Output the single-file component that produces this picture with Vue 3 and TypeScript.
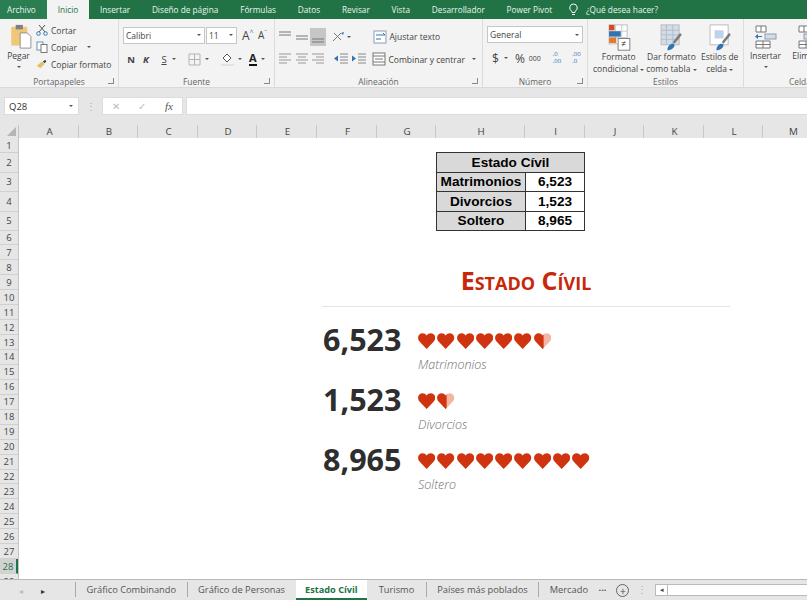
<script setup lang="ts">
interface Line { x1: number; y1: number; x2: number; y2: number }
const topTabs: string[] = ['Insertar', 'Diseño de página', 'Fórmulas', 'Datos', 'Revisar', 'Vista', 'Desarrollador', 'Power Pivot']
const columns: { name: string; width: number }[] = [
  { name: 'A', width: 60 }, { name: 'B', width: 59 }, { name: 'C', width: 60 }, { name: 'D', width: 59 },
  { name: 'E', width: 60 }, { name: 'F', width: 60 }, { name: 'G', width: 59 }, { name: 'H', width: 89 },
  { name: 'I', width: 60 }, { name: 'J', width: 59 }, { name: 'K', width: 60 }, { name: 'L', width: 59 },
  { name: 'M', width: 60 },
]
const rows = Array.from({ length: 29 }, (_, i) => ({
  n: i + 1,
  height: i === 0 ? 15 : i < 4 ? 19.5 : i === 4 ? 19 : 14.95,
  active: i === 27,
}))
const tableRows = [
  { label: 'Matrimonios', value: '6,523' },
  { label: 'Divorcios', value: '1,523' },
  { label: 'Soltero', value: '8,965' },
]
const chartRows = [
  { value: '6,523', label: 'Matrimonios', full: 6, half: true },
  { value: '1,523', label: 'Divorcios', full: 1, half: true },
  { value: '8,965', label: 'Soltero', full: 9, half: false },
]
const fullHeart = 'M9 16 L1.6 8.6 C-0.5 6.4 -0.3 3 1.5 1.4 C3.6 -0.4 7.2 -0.3 9 2.6 C10.8 -0.3 14.4 -0.4 16.5 1.4 C18.3 3 18.5 6.4 16.4 8.6 Z'
const leftHalf = 'M10 15 L9 16 L1.6 8.6 C-0.5 6.4 -0.3 3 1.5 1.4 C3.6 -0.4 7.2 -0.3 9 2.6 L10 1.6 Z'
const rightHalf = 'M9 16 L16.4 8.6 C18.5 6.4 18.3 3 16.5 1.4 C14.4 -0.4 10.8 -0.3 9 2.6 Z'

const hl = (x1: number, x2: number, y: number): Line => ({ x1, x2, y1: y, y2: y })
const valign: Line[][] = [
  [hl(2, 14, 3), hl(2, 14, 6)],
  [hl(2, 14, 7), hl(2, 14, 10)],
  [hl(2, 14, 10), hl(2, 14, 13)],
]
const halign: Line[][] = [
  [hl(2, 14, 3), hl(2, 10, 6), hl(2, 14, 9), hl(2, 10, 12)],
  [hl(2, 14, 3), hl(4, 12, 6), hl(2, 14, 9), hl(4, 12, 12)],
  [hl(2, 14, 3), hl(6, 14, 6), hl(2, 14, 9), hl(6, 14, 12)],
]
const sheets = [
  { name: 'Gráfico Combinando', active: false },
  { name: 'Gráfico de Personas', active: false },
  { name: 'Estado Cívil', active: true },
  { name: 'Turismo', active: false },
  { name: 'Países más poblados', active: false },
  { name: 'Mercado', active: false },
]
</script>

<template>
  <div class="app">
    <header class="tabs">
      <span class="tab file">Archivo</span>
      <span class="tab home">Inicio</span>
      <span v-for="t in topTabs" :key="t" class="tab">{{ t }}</span>
      <svg class="bulb" width="11" height="13" viewBox="0 0 11 13"><path d="M5.5 1a3.8 3.8 0 0 0-2 7c.4.4.5 1 .5 1.5h3c0-.5.1-1.1.5-1.5a3.8 3.8 0 0 0-2-7zM4 11.5h3" fill="none" stroke="#fff" /></svg>
      <span class="tell">¿Qué desea hacer?</span>
    </header>

    <section class="ribbon">
      <div class="group g-clip">
        <div class="body clip-body">
          <div class="big pegar">
            <svg width="25" height="25" viewBox="0 0 25 28">
              <rect x="1" y="3" width="18" height="21" rx="1" fill="#f0c778" />
              <rect x="6" y="1" width="8" height="5" fill="#7f7f7f" />
              <path d="M11 10h8l4 4v13H11z" fill="#fff" stroke="#8a8a8a" />
            </svg>
            <span class="pegar-label">Pegar</span>
            <i class="caret"></i>
          </div>
          <div class="small-list">
            <div class="small">
              <svg width="12" height="12" viewBox="0 0 12 12"><path d="M3 1l6 7M9 1L3 8" stroke="#555" fill="none" /><circle cx="2.5" cy="9.5" r="1.8" fill="none" stroke="#2f75b5" /><circle cx="9.5" cy="9.5" r="1.8" fill="none" stroke="#2f75b5" /></svg>
              Cortar
            </div>
            <div class="small">
              <svg width="12" height="12" viewBox="0 0 12 12"><rect x="1" y="1" width="6" height="8" fill="#fff" stroke="#6f8fb5" /><rect x="5" y="3.5" width="6" height="8" fill="#fff" stroke="#777" /></svg>
              Copiar <i class="caret caret-gap"></i>
            </div>
            <div class="small">
              <svg width="12" height="12" viewBox="0 0 14 12"><path d="M1 8l6-5 3 3-5 5z" fill="#e8bd62" /><path d="M8 3l3-2 1 2-2 2z" fill="#444" /></svg>
              Copiar formato
            </div>
          </div>
        </div>
        <div class="label">Portapapeles</div><i class="launcher"></i>
      </div>

      <div class="group g-font">
        <div class="body font-body">
          <div class="line">
            <div class="combo font-name"><span>Calibri</span><i class="caret"></i></div>
            <div class="combo font-size"><span>11</span><i class="caret"></i></div>
            <span class="grow-a">A<sup>^</sup></span>
            <span class="grow-a shrink">A<sup>ˇ</sup></span>
          </div>
          <div class="line fmt-line">
            <b class="fmt">N</b>
            <b class="fmt it">K</b>
            <span class="fmt und">S</span><i class="caret"></i>
            <svg class="borders" width="13" height="13" viewBox="0 0 13 13"><path d="M1 1h11v11H1zM6.5 1v11M1 6.5h11" fill="none" stroke="#b4b4b4" /></svg><i class="caret"></i>
            <svg class="fill" width="15" height="14" viewBox="0 0 15 14"><path d="M3 6l4-4 4 4-4 4z" fill="#fff" stroke="#555" /><rect x="1" y="12" width="13" height="2" fill="#e3e3e3" /></svg><i class="caret"></i>
            <span class="color-a">A</span><i class="caret"></i>
          </div>
        </div>
        <div class="label">Fuente</div><i class="launcher"></i>
      </div>

      <div class="group g-align">
        <div class="body align-body">
          <div class="line">
            <svg v-for="(ic, i) in valign" :key="i" class="aln" :class="{ on: i === 2 }" width="16" height="18" viewBox="0 0 16 16">
              <line v-for="(l, j) in ic" :key="j" :x1="l.x1" :x2="l.x2" :y1="l.y1" :y2="l.y2" stroke="#777" />
            </svg>
            <svg class="orient" width="14" height="14" viewBox="0 0 14 14"><path d="M2 11L10 3M3 3l7 7" stroke="#777" fill="none" /><path d="M10 3l3-1-1 3z" fill="#2f75b5" /></svg><i class="caret"></i>
            <svg class="wrap-ic" width="15" height="14" viewBox="0 0 15 14"><rect x="1" y="1" width="12" height="12" fill="#fff" stroke="#8a9db5" /><path d="M3 5h9l-2-2M3 9h5" fill="none" stroke="#2f75b5" /></svg>
            <span class="wrap-text">Ajustar texto</span>
          </div>
          <div class="line">
            <svg v-for="(ic, i) in halign" :key="i" class="aln" width="16" height="16" viewBox="0 0 16 16">
              <line v-for="(l, j) in ic" :key="j" :x1="l.x1" :x2="l.x2" :y1="l.y1" :y2="l.y2" stroke="#999" />
            </svg>
            <svg class="indent first" width="14" height="12" viewBox="0 0 14 12"><path d="M6 1h8M6 4h8M6 7h8M6 10h8" stroke="#888" /><path d="M0 5.5l4-3v6z" fill="#2f75b5" /></svg>
            <svg class="indent" width="14" height="12" viewBox="0 0 14 12"><path d="M6 1h8M6 4h8M6 7h8M6 10h8" stroke="#888" /><path d="M4 5.5l-4-3v6z" fill="#2f75b5" /></svg>
            <svg class="wrap-ic merge" width="15" height="14" viewBox="0 0 15 14"><rect x="1" y="1" width="12" height="12" fill="#fff" stroke="#777" /><path d="M1 4h12M1 10h12M3 7h8" fill="none" stroke="#777" /></svg>
            <span class="wrap-text">Combinar y centrar</span><i class="caret merge-caret"></i>
          </div>
        </div>
        <div class="label">Alineación</div><i class="launcher"></i>
      </div>

      <div class="group g-num">
        <div class="body num-body">
          <div class="combo num-format"><span>General</span><i class="caret"></i></div>
          <div class="line num-line">
            <span class="cur">$</span><i class="caret"></i>
            <span class="pct">%</span>
            <span class="thou">000</span>
            <span class="dec">,0<br />,00</span>
            <span class="dec second">,00<br />,0</span>
          </div>
        </div>
        <div class="label">Número</div><i class="launcher"></i>
      </div>

      <div class="group g-style">
        <div class="body style-body">
          <div class="big-btn">
            <svg width="24" height="31" viewBox="0 0 24 31">
              <rect x="1" y="1" width="20" height="21" fill="#fff" stroke="#b7b7b7" />
              <path d="M1 8h20M1 15h20M8 1v21M15 1v21" stroke="#c8c8c8" />
              <rect x="1" y="1" width="6" height="6" fill="#d9472b" />
              <rect x="1" y="8" width="13" height="6" fill="#2f75b5" />
              <rect x="1" y="15" width="8" height="6" fill="#e8772e" />
              <rect x="11" y="16" width="13" height="13" fill="#fff" stroke="#777" />
              <text x="14" y="26" class="ne">≠</text>
            </svg>
            <span>Formato</span><span>condicional <i class="caret tiny"></i></span>
          </div>
          <div class="big-btn">
            <svg width="24" height="31" viewBox="0 0 24 31">
              <rect x="1" y="1" width="20" height="22" fill="#d6dce4" stroke="#b7b7b7" />
              <path d="M1 7h20M1 12h20M1 17h20M7 1v22M14 1v22" stroke="#a9bcd2" />
              <path d="M14 20l8-10 2 2-8 10z" fill="#7a7a7a" />
              <path d="M8 29c0-5 4-8 7-7l1 2c-1 3-4 5-8 5z" fill="#2f75b5" />
            </svg>
            <span>Dar formato</span><span>como tabla <i class="caret tiny"></i></span>
          </div>
          <div class="big-btn">
            <svg width="24" height="31" viewBox="0 0 24 31">
              <rect x="1" y="1" width="20" height="22" fill="#fff" stroke="#b7b7b7" />
              <rect x="6" y="7" width="10" height="9" fill="#bcd3ea" />
              <path d="M14 20l8-10 2 2-8 10z" fill="#7a7a7a" />
              <path d="M8 29c0-5 4-8 7-7l1 2c-1 3-4 5-8 5z" fill="#2f75b5" />
            </svg>
            <span>Estilos de</span><span>celda <i class="caret tiny"></i></span>
          </div>
        </div>
        <div class="label">Estilos</div>
      </div>

      <div class="group g-cells">
        <div class="body cells-body">
          <div class="cell-btn">
            <svg width="22" height="24" viewBox="0 0 22 24">
              <path d="M1 1h10v6H1zM6 1v6M1 16h14v7H1zM8 16v7M1 19.5h14" fill="#fff" stroke="#777" />
              <rect x="10" y="9" width="11" height="5" fill="#d6dce4" stroke="#8a9db5" />
              <path d="M1 11.5h6" stroke="#2f75b5" /><path d="M0 11.5l3-2.5v5z" fill="#2f75b5" />
            </svg>
            <span>Insertar</span><i class="caret"></i>
          </div>
          <div class="cell-btn">
            <svg width="22" height="24" viewBox="0 0 22 24">
              <path d="M1 1h10v6H1zM6 1v6M1 16h14v7H1zM8 16v7M1 19.5h14" fill="#fff" stroke="#777" />
              <rect x="6" y="9" width="8" height="5" fill="#d6dce4" stroke="#8a9db5" />
              <path d="M14 7l7 9M21 7l-7 9" stroke="#d9472b" stroke-width="1.5" />
            </svg>
            <span>Eliminar</span><i class="caret"></i>
          </div>
        </div>
        <div class="label cells-label">Celdas</div>
      </div>
    </section>

    <section class="formula">
      <div class="name-box"><span>Q28</span><i class="caret"></i></div>
      <span class="grip">⋮</span>
      <div class="fx-box">
        <span class="x">✕</span><span class="check">✓</span><span class="fx">fx</span>
      </div>
      <div class="input"></div>
    </section>

    <section class="col-head">
      <div class="corner"><i></i></div>
      <div v-for="c in columns" :key="c.name" class="col" :style="{ width: c.width + 'px' }">{{ c.name }}</div>
    </section>

    <section class="sheet">
      <aside class="row-head">
        <div v-for="r in rows" :key="r.n" class="row" :class="{ active: r.active }" :style="{ height: r.height + 'px' }">{{ r.n }}</div>
      </aside>
      <main class="canvas">
        <table class="data">
          <colgroup><col class="c-label" /><col class="c-value" /></colgroup>
          <thead><tr><th colspan="2">Estado Cívil</th></tr></thead>
          <tbody>
            <tr v-for="r in tableRows" :key="r.label">
              <th>{{ r.label }}</th><td>{{ r.value }}</td>
            </tr>
          </tbody>
        </table>
        <div class="chart">
          <h1>Estado Cívil</h1>
          <div class="rule"></div>
          <div v-for="r in chartRows" :key="r.label" class="stat">
            <div class="num">{{ r.value }}</div>
            <div class="detail">
              <div class="hearts">
                <svg v-for="h in r.full" :key="h" class="heart" viewBox="0 0 18 16" preserveAspectRatio="none">
                  <path :d="fullHeart" />
                </svg>
                <svg v-if="r.half" class="heart" viewBox="0 0 18 16" preserveAspectRatio="none">
                  <path :d="rightHalf" class="pale" /><path :d="leftHalf" />
                </svg>
              </div>
              <div class="cap">{{ r.label }}</div>
            </div>
          </div>
        </div>
      </main>
    </section>

    <footer class="bottom">
      <div class="nav">
        <span class="prev">◂</span><span class="next">▸</span>
      </div>
      <span v-for="s in sheets" :key="s.name" class="sheet-tab" :class="{ on: s.active }">{{ s.name }}</span>
      <span class="more">...</span>
      <span class="plus">+</span>
      <span class="grip">⋮</span>
      <div class="scroll"><span class="arrow">◂</span></div>
    </footer>
  </div>
</template>

<style scoped>
.app { width: 807px; height: 600px; overflow: hidden; display: flex; flex-direction: column; background: #e6e6e6; font-family: "Open Sans", "Noto Sans", sans-serif; color: #444; font-size: 8.5px; }
i { font-style: normal; }
.tabs { height: 19px; flex: none; background: #217346; display: flex; align-items: center; color: #fff; font-size: 8.25px; white-space: nowrap; }
.tab { padding: 0 10.9px; line-height: 19px; color: #e9f3ee; }
.tab.file { width: 47px; padding: 0 0 0 7px; background: #2b7d52; box-sizing: border-box; }
.tab.home { background: #f3f3f3; color: #217346; width: 42px; padding: 0; text-align: center; margin-right: 0; }
.bulb { margin-left: 5px; }
.tell { margin-left: 7px; color: #e9f3ee; }
.ribbon { height: 69px; flex: none; background: #f3f3f3; border-bottom: 1px solid #d9d9d9; box-sizing: border-box; display: flex; overflow: hidden; }
.group { position: relative; flex: none; display: flex; flex-direction: column; border-right: 1px solid #dcdcdc; box-sizing: border-box; }
.body { height: 56px; flex: none; display: flex; }
.label { text-align: center; color: #666; font-size: 8.4px; line-height: 14px; flex: none; }
.launcher { position: absolute; right: 4px; bottom: 3px; width: 5px; height: 5px; border-right: 1px solid #888; border-bottom: 1px solid #888; }
.caret { display: inline-block; width: 0; height: 0; border-left: 2px solid transparent; border-right: 2px solid transparent; border-top: 2.5px solid #555; }
.g-clip { width: 119px; }
.g-font { width: 156px; }
.g-align { width: 208px; }
.g-num { width: 105px; }
.g-style { width: 156px; }
.g-cells { width: 73px; border-right: 0; }
.clip-body { padding: 5px 0 0 5px; box-sizing: border-box; }
.big { width: 27px; display: flex; flex-direction: column; align-items: center; }
.pegar svg { margin-left: 6px; }
.pegar-label { margin-top: 1px; line-height: 12px; }
.pegar .caret { margin-top: 4px; }
.small-list { margin-left: 4px; display: flex; flex-direction: column; gap: 5px; }
.small { display: flex; align-items: center; gap: 3px; height: 12px; white-space: nowrap; font-size: 8.5px; }
.small .caret-gap { margin-left: 7px; }
.font-body { flex-direction: column; padding: 7px 0 0 4px; box-sizing: border-box; }
.line { display: flex; align-items: center; height: 18px; }
.combo { background: #fff; border: 1px solid #c6c6c6; box-sizing: border-box; height: 17px; display: flex; align-items: center; justify-content: space-between; padding: 0 3px 0 2px; color: #444; }
.font-name { width: 82px; margin-right: 1px; }
.font-size { width: 31px; }
.grow-a { font-size: 12px; margin-left: 5px; width: 13px; }
.grow-a sup { font-size: 7px; color: #2f75b5; line-height: 0; }
.shrink { font-size: 10px; margin-left: 3px; }
.fmt-line { margin-top: 6px; }
.fmt { margin-left: 4px; width: 8px; font-size: 9.5px; text-align: center; }
.fmt.it { margin-left: 7px; font-style: italic; }
.fmt.und { margin-left: 10px; text-decoration: underline; margin-right: 4px; }
.borders { margin: 0 4px 0 12px; }
.fill { margin: 0 3px 0 11px; }
.color-a { margin-left: 7px; margin-right: 4px; font-size: 11px; font-weight: 700; color: #222; border-bottom: 2px solid #111; line-height: 12px; }
.align-body { flex-direction: column; padding: 4px 0 0 2px; box-sizing: border-box; }
.align-body .line:first-child { height: 19px; margin-top: 4px; }
.align-body .line + .line { margin-top: 4px; }
.aln { flex: none; margin-right: 0.5px; }
.aln.on { background: #c6c6c6; }
.orient { margin-left: 4px; margin-right: 2px; }
.wrap-ic { margin-left: 22px; margin-right: 2px; }
.align-body .line + .line .wrap-ic { margin-left: 6px; }
.wrap-text { font-size: 8.5px; white-space: nowrap; color: #444; }
.indent { margin-left: 4px; flex: none; }
.indent.first { margin-left: 7px; }
.merge-caret { margin-left: 7px; }
.num-body { flex-direction: column; padding: 7px 0 0 4px; box-sizing: border-box; }
.num-format { width: 96px; }
.num-line { margin-top: 6px; height: 18px; }
.cur { font-size: 12px; margin-left: 5px; margin-right: 5px; }
.pct { font-size: 12px; margin-left: 7px; }
.thou { font-size: 7px; margin-left: 4px; }
.dec { font-size: 6px; line-height: 7px; margin-left: 12px; color: #2f75b5; }
.dec.second { margin-left: 11px; }
.style-body { padding-top: 5px; box-sizing: border-box; justify-content: flex-start; }
.big-btn { width: 48px; display: flex; flex-direction: column; align-items: center; line-height: 12px; white-space: nowrap; font-size: 8.5px; }
.big-btn:nth-child(1) { width: 57px; margin-left: 3px; }
.big-btn:nth-child(2) { width: 50px; }
.big-btn svg { margin-bottom: -1px; height: 31px; }
.tiny { border-top-width: 2px; vertical-align: middle; }
.ne { font-size: 10px; fill: #333; font-family: "Open Sans", sans-serif; }
.cells-body { padding-top: 6px; box-sizing: border-box; }
.cell-btn { width: 43px; flex: none; display: flex; flex-direction: column; align-items: center; line-height: 12px; white-space: nowrap; }
.cell-btn svg { margin-bottom: 1px; }
.cell-btn .caret { margin-top: 4px; }
.cells-label { text-align: left; padding-left: 45px; white-space: nowrap; }
.formula { height: 18px; flex: none; margin-top: 9px; display: flex; align-items: stretch; }
.name-box { margin-left: 4px; width: 75px; background: #fff; box-sizing: border-box; border: 1px solid #dcdcdc; display: flex; align-items: center; justify-content: space-between; padding: 0 5px 0 4px; font-size: 9.5px; color: #333; }
.grip { color: #aaa; width: 23px; text-align: center; font-size: 10px; line-height: 18px; }
.fx-box { width: 81px; background: #fff; border: 1px solid #dcdcdc; box-sizing: border-box; display: flex; align-items: center; color: #bbb; }
.x { margin-left: 9px; font-size: 10px; }
.check { margin-left: 18px; font-size: 10px; }
.fx { margin-left: 19px; color: #555; font-family: "Liberation Serif", serif; font-style: italic; font-size: 11px; }
.input { flex: 1; margin-left: 3px; background: #fff; border: 1px solid #dcdcdc; border-right: 0; }
.col-head { height: 13px; flex: none; margin-top: 10px; display: flex; border-bottom: 1px solid #c4c4c4; box-sizing: content-box; }
.corner { width: 19px; flex: none; position: relative; border-right: 1px solid #c4c4c4; box-sizing: border-box; }
.corner i { position: absolute; right: 2px; bottom: 2px; width: 0; height: 0; border-left: 9px solid transparent; border-bottom: 9px solid #b5b5b5; }
.col { flex: none; box-sizing: border-box; border-right: 1px solid #c8c8c8; padding-left: 2px; text-align: center; font-size: 9.8px; line-height: 13px; color: #444; }
.sheet { flex: 1; min-height: 0; display: flex; overflow: hidden; margin-top: -1px; }
.row-head { width: 19px; flex: none; background: #e6e6e6; border-right: 1px solid #c4c4c4; box-sizing: border-box; }
.row { display: flex; align-items: center; justify-content: center; box-sizing: border-box; border-bottom: 1px solid #d0d0d0; font-size: 9.5px; color: #444; }
.row.active { background: #d2d2d2; color: #217346; border-right: 2px solid #217346; }
.canvas { flex: 1; background: #fff; padding: 14px 0 0 417px; overflow: hidden; }
.data { border-collapse: collapse; width: 148px; table-layout: fixed; font-family: "Liberation Sans", Arial, sans-serif; font-size: 13.6px; color: #000; border: 1px solid #333; }
.c-label { width: 89px; }
.c-value { width: 59px; }
.data th, .data td { border: 1px solid #333; height: 19.5px; padding: 0; font-weight: 700; text-align: center; box-sizing: border-box; white-space: nowrap; }
.data th { background: #d9d9d9; }
.data td { background: #fff; }
.chart { width: 408px; margin: 33px 0 0 -114px; }
.chart h1 { margin: 0; text-align: center; font-size: 25px; line-height: 32px; font-weight: 700; font-variant: small-caps; color: #c8280a; }
.rule { height: 1px; background: #e4e4e4; margin-top: 10px; margin-bottom: 12px; }
.stat { display: flex; height: 60px; }
.num { width: 95px; font-size: 30.5px; font-weight: 700; color: #2e2e2e; line-height: 40px; white-space: nowrap; flex: none; margin-left: 1px; }
.detail { padding-top: 14px; }
.hearts { display: flex; gap: 2px; height: 16px; }
.heart { flex: none; width: 17.3px; height: 16px; fill: #cf330f; }
.heart .pale { fill: #f3b5a6; }
.cap { margin-top: 7px; font-size: 12.5px; line-height: 17px; font-style: italic; font-weight: 300; color: #707070; }
.bottom { height: 21px; flex: none; background: #e6e6e6; border-top: 1px solid #b8b8b8; box-sizing: border-box; display: flex; align-items: stretch; font-size: 9.3px; color: #555; white-space: nowrap; position: relative; z-index: 1; }
.nav { width: 75px; flex: none; box-sizing: border-box; display: flex; align-items: center; color: #bbb; padding-left: 19px; font-size: 8px; }
.next { color: #333; margin-left: 18px; }
.sheet-tab { border-left: 1px solid #aaa; padding: 0 10.5px; height: 15px; align-self: flex-start; margin-top: 2px; line-height: 15px; }
.sheet-tab.on { border-left: 0; background: #fff; color: #217346; font-weight: 700; font-size: 9.2px; height: 20px; margin-top: 0; line-height: 19px; padding: 0 9.5px; border-bottom: 2px solid #217346; box-sizing: border-box; }
.sheet-tab.on + .sheet-tab { border-left: 0; padding: 0 11.5px; }
.more { font-weight: 700; line-height: 16px; }
.plus { margin-left: 10px; width: 11px; height: 11px; align-self: center; border: 1px solid #666; border-radius: 50%; text-align: center; line-height: 11px; font-size: 11px; }
.bottom .grip { width: 26px; line-height: 19px; flex: none; }
.scroll { flex: 1; height: 10px; align-self: center; background: #fff; border: 1px solid #bbb; border-right: 0; }
.arrow { display: block; width: 11px; height: 10px; border-right: 1px solid #bbb; font-size: 7px; line-height: 9px; text-align: center; color: #444; }
</style>
